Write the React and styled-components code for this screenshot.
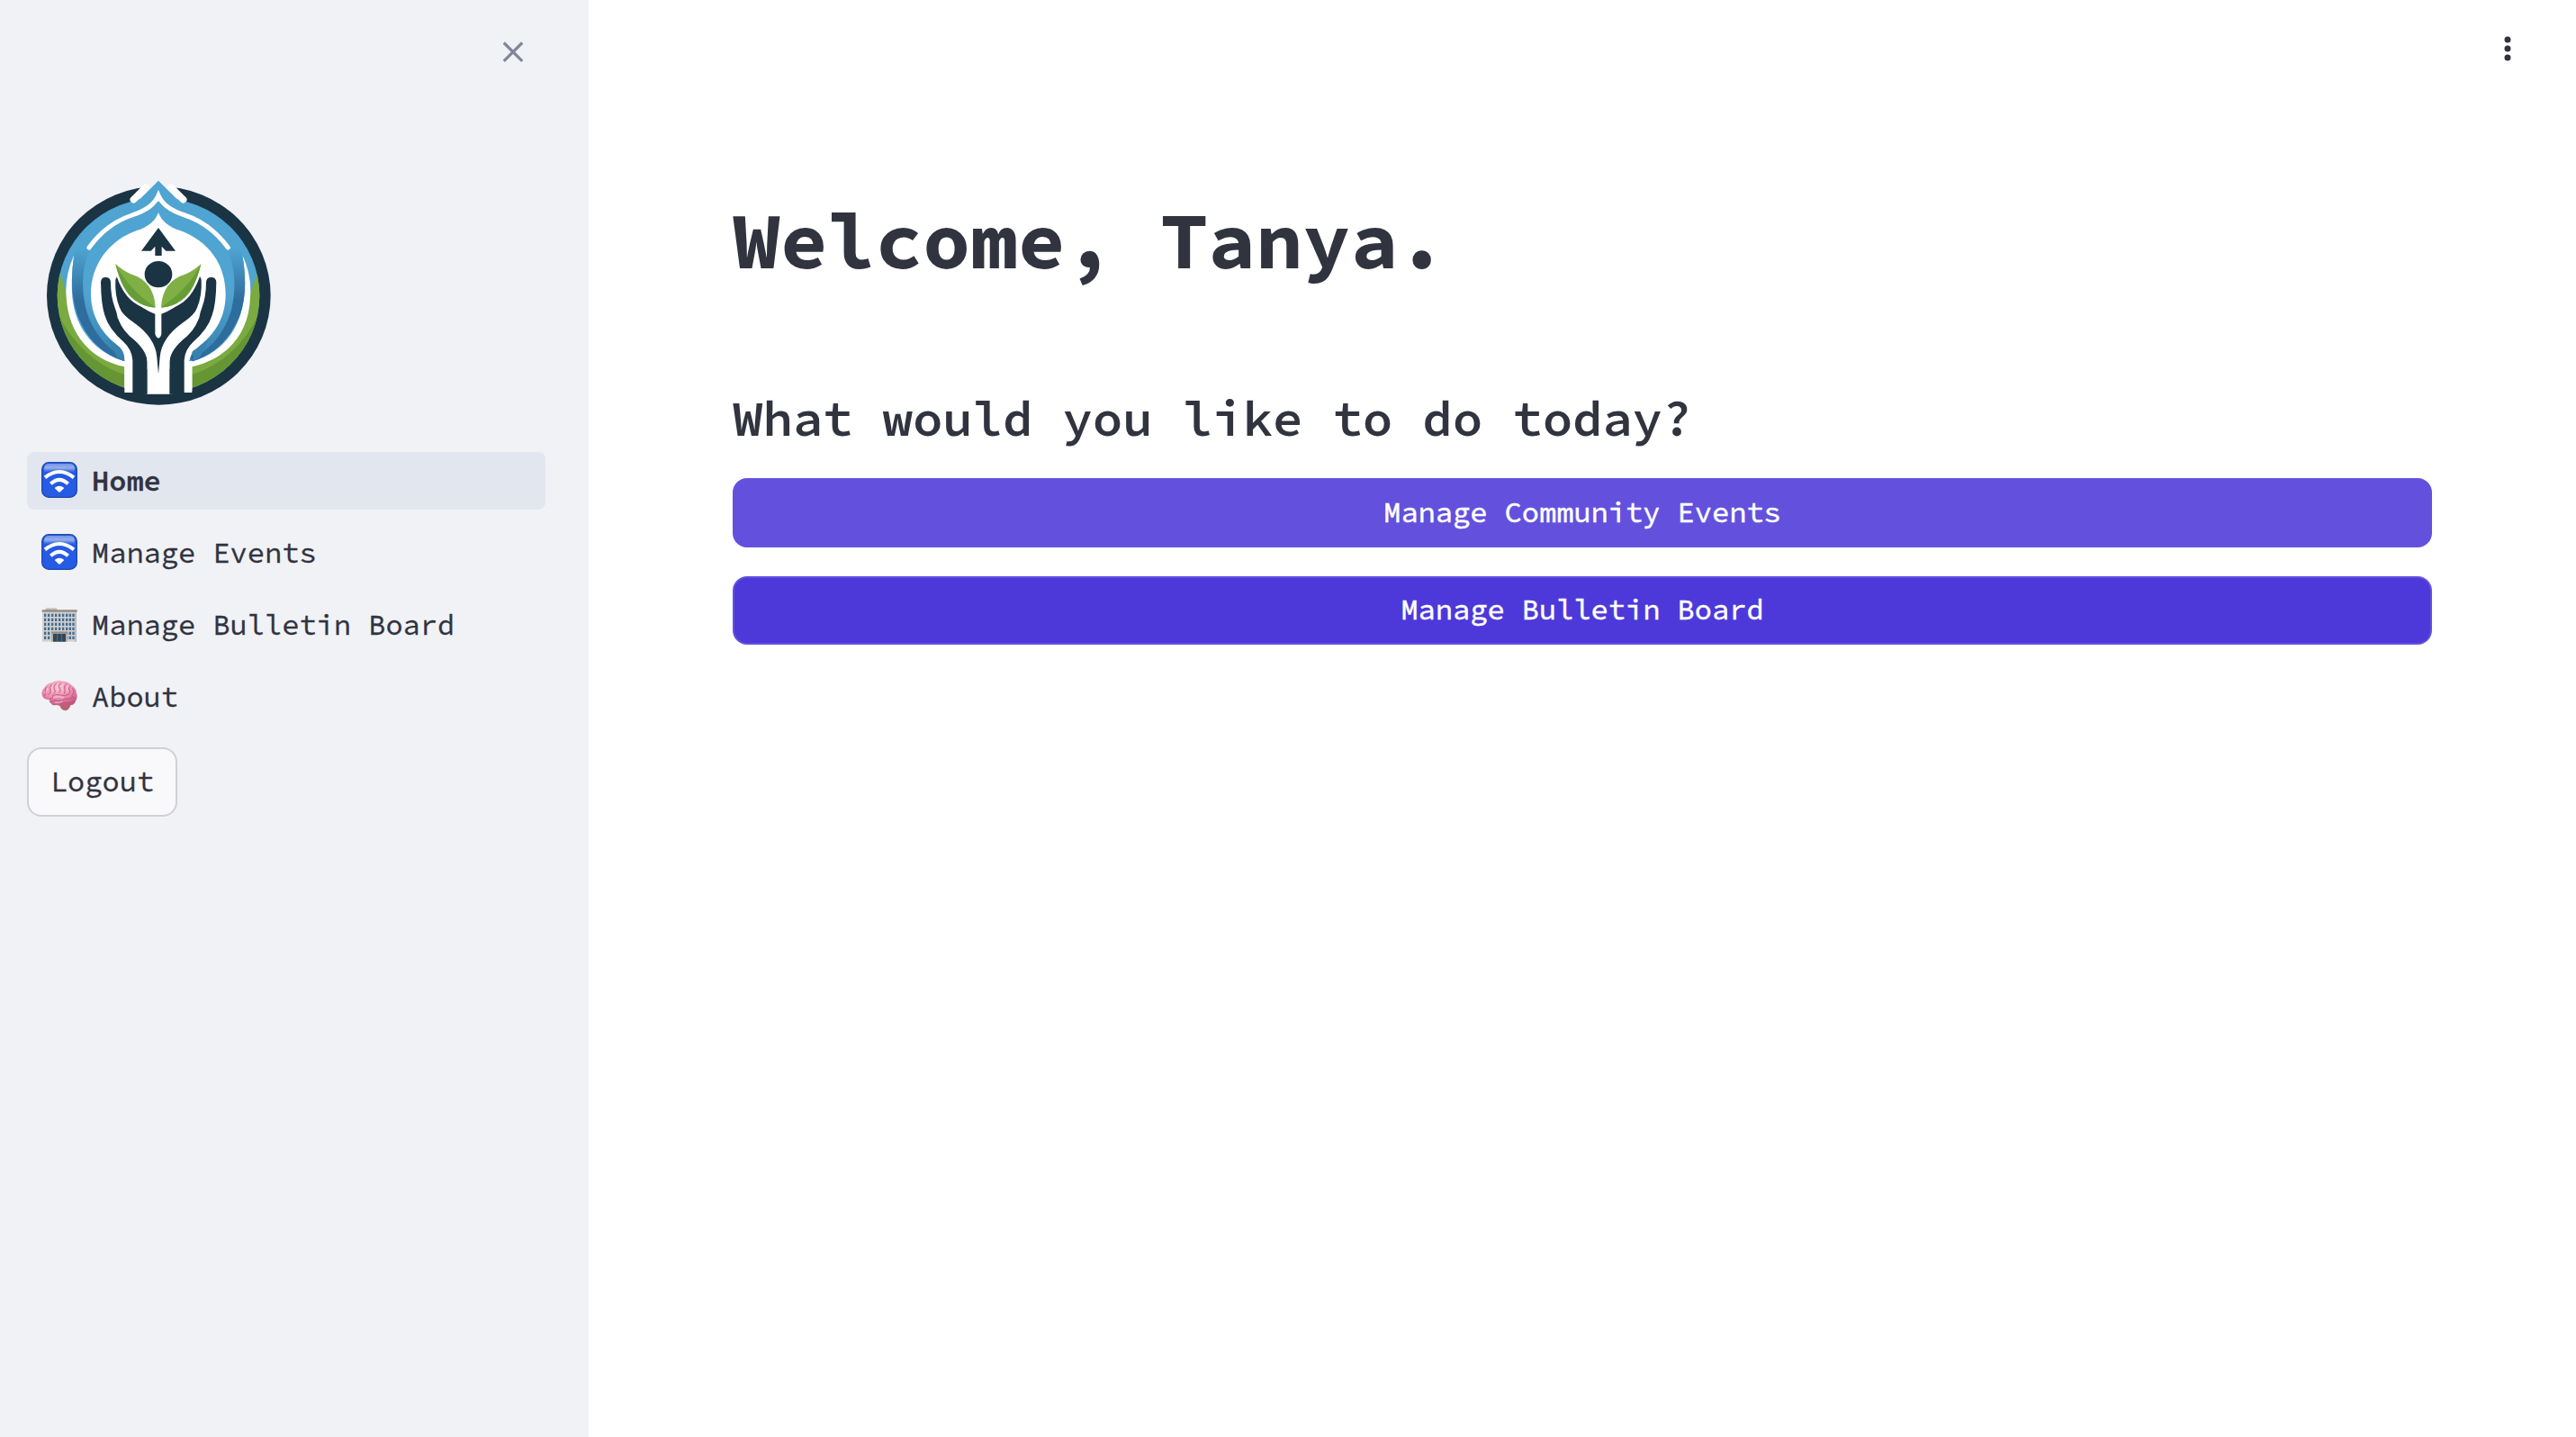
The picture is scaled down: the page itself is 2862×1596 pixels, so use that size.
import React from 'react';
import styled, { createGlobalStyle } from 'styled-components';

const mono = '"Source Code Pro", "DejaVu Sans Mono", monospace';

const GlobalStyle = createGlobalStyle`
  *, *::before, *::after { box-sizing: border-box; }
  body { margin: 0; background: #fff; color: #31333f; font-family: ${mono}; -webkit-font-smoothing: antialiased; }
`;

const Page = styled.div`
  display: flex;
  height: 1596px;
  overflow: hidden;
`;

const Sidebar = styled.aside`
  width: 654px;
  flex: none;
  background: #f0f2f6;
  display: flex;
  flex-direction: column;
`;

const SidebarHeader = styled.div`
  display: flex;
  justify-content: flex-end;
  padding: 42px 68px 0 0;
  height: 180px;
`;

const IconButton = styled.button`
  border: 0;
  padding: 0;
  background: none;
  width: 32px;
  height: 32px;
  display: flex;
  color: ${(p) => p.$color};
`;

const LogoBox = styled.div`
  margin-left: 30px;
  width: 290px;
  height: 322px;
  svg { display: block; }
`;

const Nav = styled.nav`
  display: flex;
  flex-direction: column;
  gap: 16px;
  padding: 0 48px 0 30px;
`;

const NavItem = styled.a`
  display: flex;
  align-items: center;
  gap: 16px;
  height: 64px;
  padding: 0 16px;
  border-radius: 8px;
  font-size: 32px;
  line-height: 64px;
  white-space: pre;
  color: #31333f;
  font-weight: ${(p) => (p.$active ? 600 : 400)};
  background: ${(p) => (p.$active ? '#e2e7ef' : 'transparent')};
  -webkit-text-stroke: 0.3px currentColor;
  svg { flex: none; display: block; margin-top: -2px; }
`;

const LogoutButton = styled.button`
  margin: 24px 0 0 30px;
  align-self: flex-start;
  width: 167px;
  height: 77px;
  padding: 0 0 1px;
  border: 2px solid #d0d1d6;
  border-radius: 16px;
  background: #f9f9fb;
  color: #31333f;
  font: 400 32px/51px ${mono};
  -webkit-text-stroke: 0.3px currentColor;
`;

const Main = styled.main`
  flex: 1;
  display: flex;
  flex-direction: column;
`;

const Toolbar = styled.header`
  display: flex;
  justify-content: flex-end;
  height: 214px;
  padding: 38px 60px 0 0;
`;

const Content = styled.section`
  padding: 0 160px;
  display: flex;
  flex-direction: column;
`;

const Title = styled.h1`
  margin: 0;
  font-size: 88px;
  line-height: 106px;
  font-weight: 700;
`;

const Subtitle = styled.h3`
  margin: 111px 0 33px;
  font-size: 56px;
  line-height: 67px;
  font-weight: 600;
  letter-spacing: -0.005em;
`;

const ActionButton = styled.button`
  height: ${(p) => p.$height}px;
  margin-bottom: 32px;
  padding: 0 0 1px;
  border: 2px solid #6351de;
  border-radius: 16px;
  background: ${(p) => (p.$hovered ? '#6351de' : '#4d39da')};
  color: #fff;
  font: 400 32px/51px ${mono};
  -webkit-text-stroke: 0.5px currentColor;
`;

const CloseIcon = () => (
  <svg width="32" height="32" viewBox="0 0 32 32">
    <path d="M5.8 5.5 26.2 25.9M26.2 5.5 5.8 25.9" stroke="currentColor" strokeWidth="3.2" fill="none" />
  </svg>
);

const DotsIcon = () => (
  <svg width="32" height="32" viewBox="0 0 32 32" fill="currentColor">
    <circle cx="16" cy="6" r="3.5" />
    <circle cx="16" cy="16" r="3.5" />
    <circle cx="16" cy="26" r="3.5" />
  </svg>
);

const WifiIcon = () => (
  <svg width="40" height="40" viewBox="0 0 120 120">
    <defs>
      <linearGradient id="wifiShine" x1="0" y1="0" x2="0" y2="1">
        <stop offset="0" stopColor="#7295e6" />
        <stop offset="0.5" stopColor="#96aeea" />
        <stop offset="1" stopColor="#255ce6" />
      </linearGradient>
    </defs>
    <rect x="2" y="2" width="116" height="116" rx="23" fill="#265be4" stroke="#2049ad" strokeWidth="4" />
    <path d="M9 34V22Q10 6 25 6H95Q110 6 111 22V34Z" fill="url(#wifiShine)" />
    <g fill="none" stroke="#fff">
      <path d="M12 52Q60 14 108 52" strokeWidth="12" />
      <path d="M31 73Q60 46 89 73" strokeWidth="12" />
    </g>
    <path d="M44 87Q60 74 76 87L64 99Q60 102 56 99Z" fill="#fff" />
  </svg>
);

const floors = [18, 33, 48, 63, 78, 93];
const bays = [9, 21, 33, 45, 57, 69, 81, 92, 103];

const OfficeIcon = () => (
  <svg width="40" height="40" viewBox="0 0 120 120">
    <rect x="14" y="7" width="38" height="8" fill="#c0bebb" />
    <rect x="3" y="17" width="114" height="102" fill="#d3d0cc" />
    <rect x="112" y="20" width="5" height="99" fill="#b6babc" />
    <rect x="2" y="13" width="117" height="7" fill="#8f8780" />
    {floors.map((y) =>
      bays.map((x) => (
        <rect key={`${x}-${y}`} x={x} y={y + 8} width="7" height="10" fill="#3f6d94" />
      ))
    )}
    <rect x="33" y="86" width="54" height="33" fill="#b1aca7" />
    <rect x="33" y="86" width="54" height="6" fill="#948c86" />
    <rect x="39" y="93" width="42" height="26" fill="#30475a" />
    <path d="M53 93V119M67 93V119" stroke="#73838e" strokeWidth="2" />
  </svg>
);

const BrainIcon = () => (
  <svg width="40" height="40" viewBox="0 0 120 120">
    <defs>
      <radialGradient id="brainFill" cx="0.45" cy="0.25" r="0.75">
        <stop offset="0" stopColor="#f9bfd0" />
        <stop offset="0.55" stopColor="#ec93b1" />
        <stop offset="1" stopColor="#c4577f" />
      </radialGradient>
    </defs>
    <path d="M60 91Q64 84 76 87Q92 82 97 92Q92 105 82 109Q72 109 66 102Z" fill="#b8636b" />
    <path
      d="M2 57Q-2 42 10 32Q18 18 35 15Q52 6 72 11Q91 11 101 25Q116 34 117 50Q122 65 114 77Q110 90 97 91Q86 95 76 90Q64 94 50 90Q37 94 29 82Q24 76 27 71Q8 75 2 57Z"
      fill="url(#brainFill)"
    />
    <g fill="none" stroke="#bc4f78" strokeWidth="2.6" strokeLinecap="round">
      <path d="M8 60Q20 50 13 42Q9 35 18 31" />
      <path d="M27 71Q42 69 38 58Q48 53 64 57Q76 62 90 55" />
      <path d="M24 56Q34 49 30 39Q24 32 34 22" />
      <path d="M42 51Q51 45 43 37Q38 27 49 18" />
      <path d="M58 49Q68 43 60 33Q54 25 66 16" />
      <path d="M76 52Q82 42 77 36Q73 25 83 20" />
      <path d="M91 55Q100 45 93 39Q87 32 97 28" />
      <path d="M104 35Q112 48 104 55Q98 63 112 70" />
      <path d="M31 80Q41 70 55 76Q69 80 80 69Q91 73 101 66" />
      <path d="M62 89Q75 78 87 84Q97 87 106 77" />
    </g>
    <g fill="none" stroke="#fbd3df" strokeWidth="2.4" strokeLinecap="round">
      <path d="M15 50Q20 43 20 35M36 46Q36 34 38 24M52 43Q50 31 54 21M69 43Q67 31 72 19M86 45Q85 34 88 26M40 64Q57 59 74 65M46 82Q60 83 70 78" />
    </g>
  </svg>
);

const Logo = () => (
  <svg width="290" height="290" viewBox="0 0 870 870">
    <defs>
      <linearGradient id="ring" x1="0" y1="0" x2="0" y2="1">
        <stop offset="0.3" stopColor="#4fa4d1" />
        <stop offset="0.62" stopColor="#2f6d9d" />
        <stop offset="1" stopColor="#2d6c9e" />
      </linearGradient>
      <linearGradient id="innerRing" x1="0" y1="0" x2="0" y2="1">
        <stop offset="0.6" stopColor="#4fa4d1" />
        <stop offset="1" stopColor="#3781b0" />
      </linearGradient>
      <clipPath id="disc">
        <ellipse cx="438" cy="445" rx="337" ry="326" />
      </clipPath>
    </defs>
    <ellipse cx="439" cy="445" rx="373" ry="364" fill="#1b3444" />
    <path d="M380 84L344 122L438 130L532 122L496 84L470 40H400Z" fill="#f0f2f6" />
    <g clipPath="url(#disc)">
      <rect x="90" y="90" width="700" height="700" fill="#4fa4d1" />
      <path d="M90 330L112 374Q125 410 134 450Q160 610 325 680H550Q715 610 743 440L768 370L800 330V800H90Z" fill="#7baa41" />
      <path d="M100 500Q180 660 325 708V800H90ZM776 500Q700 660 550 708V800H790Z" fill="#659633" />
    </g>
    <path d="M355 125L396 86M521 125L480 86" stroke="#fff" strokeWidth="23" strokeLinecap="round" />
    <path d="M438 62L508 132L560 160H316L368 132Z" fill="#4fa4d1" />
    <path d="M157 310Q125 380 131 450C138 575 215 660 325 682V768H550V682C665 655 740 575 744 450Q750 380 718 310Q732 390 724 450C710 560 650 635 552 664H325C230 635 162 560 151 450Q146 390 157 310Z" fill="#fff" />
    <path d="M157 310Q210 220 330 185Q400 165 438 126Q476 165 546 185Q670 220 718 310Q738 430 710 510Q660 630 552 664L438 560L325 664Q215 630 168 510Q138 420 157 310Z" fill="url(#ring)" />
    <path d="M205 300Q235 220 345 190Q410 170 438 126Q466 170 530 190Q640 220 672 300Q705 390 682 490Q650 600 560 650L438 560L318 650Q220 590 194 480Q174 380 205 300Z" fill="url(#innerRing)" />
    <path d="M207 285Q265 205 350 177Q420 155 438 112Q456 155 526 177Q611 205 670 285" fill="none" stroke="#fff" strokeWidth="15" strokeLinecap="round" />
    <path d="M438 98L450 120L438 132L426 120Z" fill="#fff" />
    <path d="M438 168Q453 210 510 228C605 263 662 340 662 440C662 520 625 580 552 630L540 664H550V762L475 773H400L325 752V664Q326 625 300 610Q213 540 213 440C213 340 275 260 366 228Q423 210 438 168Z" fill="#fff" />
    <path d="M325 664Q322 632 300 610L270 590L300 650ZM552 664Q556 632 578 610L606 590L576 650Z" fill="#3781b0" />
    <g fill="#1b3444">
      <path d="M438 219L495 296H463L449 281V312H427V281L413 296H381Z" />
      <path d="M246 400Q247 384 262 384Q278 384 279 400Q279 450 293 485Q299 500 302 518Q312 545 342 573Q399 615 401 665V773H352V660Q350 625 322 599Q273 557 259 510Q247 475 246 400Z" />
      <path d="M631 400Q630 384 614 384Q598 384 597 400Q597 450 583 485Q577 500 574 518Q564 545 534 573Q477 615 475 665V773H524V660Q526 625 554 599Q603 557 617 510Q630 475 631 400Z" />
      <path d="M295 392Q300 375 308 382Q325 430 352 458Q385 490 427 506V572Q430 584 438 587Q446 584 448 572V506Q490 490 524 458Q552 430 568 382Q577 375 581 392Q584 445 567 485Q560 507 520 535Q448 586 443 650L438 706L433 650Q428 586 356 535Q316 507 309 485Q292 445 295 392Z" />
    </g>
    <path d="M302 505Q312 495 323 510Q340 535 375 560Q418 590 424 650V690H401V665Q399 625 342 580Q305 545 302 505ZM574 505Q564 495 553 510Q536 535 501 560Q458 590 452 650V690H475V665Q477 625 534 580Q571 545 574 505Z" fill="#fff" />
    <g fill="#80b045" stroke="#fff" strokeWidth="16" paintOrder="stroke">
      <path d="M295 339Q313 357 345 373Q424 397 428 484Q395 486 359 460Q316 428 295 339Z" />
      <path d="M580 339Q562 357 530 373Q451 397 447 484Q480 486 516 460Q559 428 580 339Z" />
    </g>
    <g fill="#679d37">
      <path d="M295 339Q337 423 428 484Q395 486 359 460Q316 428 295 339Z" />
      <path d="M580 339Q538 423 447 484Q480 486 516 460Q559 428 580 339Z" />
    </g>
    <ellipse cx="438" cy="374" rx="46" ry="44" fill="#1b3444" />
  </svg>
);

const links = [
  { label: 'Home', Icon: WifiIcon, active: true },
  { label: 'Manage Events', Icon: WifiIcon },
  { label: 'Manage Bulletin Board', Icon: OfficeIcon },
  { label: 'About', Icon: BrainIcon },
];

export default function App() {
  return (
    <Page>
      <GlobalStyle />
      <Sidebar>
        <SidebarHeader>
          <IconButton $color="#83859a" aria-label="Close sidebar"><CloseIcon /></IconButton>
        </SidebarHeader>
        <LogoBox><Logo /></LogoBox>
        <Nav>
          {links.map(({ label, Icon, active }) => (
            <NavItem key={label} $active={active}><Icon />{label}</NavItem>
          ))}
        </Nav>
        <LogoutButton>Logout</LogoutButton>
      </Sidebar>
      <Main>
        <Toolbar>
          <IconButton $color="#31333f" aria-label="Main menu"><DotsIcon /></IconButton>
        </Toolbar>
        <Content>
          <Title>Welcome, Tanya.</Title>
          <Subtitle>What would you like to do today?</Subtitle>
          <ActionButton $hovered $height={77}>Manage Community Events</ActionButton>
          <ActionButton $height={76}>Manage Bulletin Board</ActionButton>
        </Content>
      </Main>
    </Page>
  );
}
